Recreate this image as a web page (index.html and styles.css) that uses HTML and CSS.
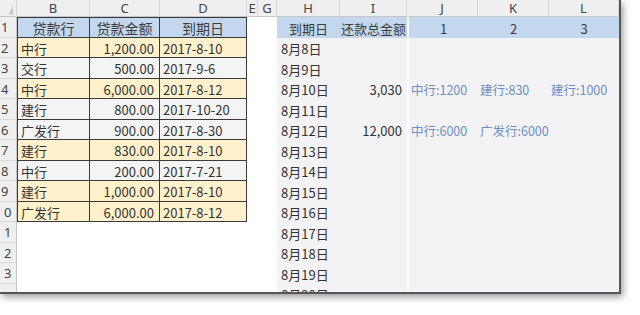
FILE: index.html
```html
<!DOCTYPE html>
<html lang="zh-CN">
<head>
<meta charset="utf-8">
<title>贷款到期汇总</title>
<link rel="stylesheet" href="styles.css">
</head>
<body>
<div class="window">
  <div class="sheet">
    <!-- column headers -->
    <div class="c ch corner"><svg width="17" height="17" viewBox="0 0 17 17"><polygon points="9,15 14,15 14,5" fill="#c9c9c9"/></svg></div>
    <div class="c ch">B</div>
    <div class="c ch">C</div>
    <div class="c ch">D</div>
    <div class="c ch">E</div>
    <div class="c ch">G</div>
    <div class="c ch">H</div>
    <div class="c ch">I</div>
    <div class="c ch">J</div>
    <div class="c ch">K</div>
    <div class="c ch">L</div>

    <!-- row 1 -->
    <div class="c rh">1</div>
    <div class="c t tl tt hd ctr big">贷款行</div>
    <div class="c t tt hd ctr big">贷款金额</div>
    <div class="c t tt hd ctr big">到期日</div>
    <div class="c w"></div>
    <div class="c w"></div>
    <div class="c hd ctr">到期日</div>
    <div class="c hd ctr">还款总金额</div>
    <div class="c hd ctr rj">1</div>
    <div class="c hd ctr">2</div>
    <div class="c hd ctr">3</div>

    <!-- row 2 -->
    <div class="c rh">2</div>
    <div class="c t tl y">中行</div>
    <div class="c t y num">1,200.00</div>
    <div class="c t y">2017-8-10</div>
    <div class="c w"></div>
    <div class="c w"></div>
    <div class="c r dt">8月8日</div>
    <div class="c r num"></div>
    <div class="c r rj"></div>
    <div class="c r"></div>
    <div class="c r"></div>

    <!-- row 3 -->
    <div class="c rh">3</div>
    <div class="c t tl g">交行</div>
    <div class="c t g num">500.00</div>
    <div class="c t g">2017-9-6</div>
    <div class="c w"></div>
    <div class="c w"></div>
    <div class="c r dt">8月9日</div>
    <div class="c r num"></div>
    <div class="c r rj"></div>
    <div class="c r"></div>
    <div class="c r"></div>

    <!-- row 4 -->
    <div class="c rh">4</div>
    <div class="c t tl y">中行</div>
    <div class="c t y num">6,000.00</div>
    <div class="c t y">2017-8-12</div>
    <div class="c w"></div>
    <div class="c w"></div>
    <div class="c r dt">8月10日</div>
    <div class="c r num">3,030</div>
    <div class="c r rj bl">中行:1200</div>
    <div class="c r bl">建行:830</div>
    <div class="c r bl">建行:1000</div>

    <!-- row 5 -->
    <div class="c rh">5</div>
    <div class="c t tl g">建行</div>
    <div class="c t g num">800.00</div>
    <div class="c t g">2017-10-20</div>
    <div class="c w"></div>
    <div class="c w"></div>
    <div class="c r dt">8月11日</div>
    <div class="c r num"></div>
    <div class="c r rj"></div>
    <div class="c r"></div>
    <div class="c r"></div>

    <!-- row 6 -->
    <div class="c rh">6</div>
    <div class="c t tl g">广发行</div>
    <div class="c t g num">900.00</div>
    <div class="c t g">2017-8-30</div>
    <div class="c w"></div>
    <div class="c w"></div>
    <div class="c r dt">8月12日</div>
    <div class="c r num">12,000</div>
    <div class="c r rj bl">中行:6000</div>
    <div class="c r bl">广发行:6000</div>
    <div class="c r"></div>

    <!-- row 7 -->
    <div class="c rh">7</div>
    <div class="c t tl y">建行</div>
    <div class="c t y num">830.00</div>
    <div class="c t y">2017-8-10</div>
    <div class="c w"></div>
    <div class="c w"></div>
    <div class="c r dt">8月13日</div>
    <div class="c r num"></div>
    <div class="c r rj"></div>
    <div class="c r"></div>
    <div class="c r"></div>

    <!-- row 8 -->
    <div class="c rh">8</div>
    <div class="c t tl g">中行</div>
    <div class="c t g num">200.00</div>
    <div class="c t g">2017-7-21</div>
    <div class="c w"></div>
    <div class="c w"></div>
    <div class="c r dt">8月14日</div>
    <div class="c r num"></div>
    <div class="c r rj"></div>
    <div class="c r"></div>
    <div class="c r"></div>

    <!-- row 9 -->
    <div class="c rh">9</div>
    <div class="c t tl y">建行</div>
    <div class="c t y num">1,000.00</div>
    <div class="c t y">2017-8-10</div>
    <div class="c w"></div>
    <div class="c w"></div>
    <div class="c r dt">8月15日</div>
    <div class="c r num"></div>
    <div class="c r rj"></div>
    <div class="c r"></div>
    <div class="c r"></div>

    <!-- row 10 -->
    <div class="c rh rh2">0</div>
    <div class="c t tl y">广发行</div>
    <div class="c t y num">6,000.00</div>
    <div class="c t y">2017-8-12</div>
    <div class="c w"></div>
    <div class="c w"></div>
    <div class="c r dt">8月16日</div>
    <div class="c r num"></div>
    <div class="c r rj"></div>
    <div class="c r"></div>
    <div class="c r"></div>

    <!-- row 11 -->
    <div class="c rh rh2">1</div>
    <div class="c w"></div>
    <div class="c w"></div>
    <div class="c w"></div>
    <div class="c w"></div>
    <div class="c w"></div>
    <div class="c r dt">8月17日</div>
    <div class="c r num"></div>
    <div class="c r rj"></div>
    <div class="c r"></div>
    <div class="c r"></div>

    <!-- row 12 -->
    <div class="c rh rh2">2</div>
    <div class="c w"></div>
    <div class="c w"></div>
    <div class="c w"></div>
    <div class="c w"></div>
    <div class="c w"></div>
    <div class="c r dt">8月18日</div>
    <div class="c r num"></div>
    <div class="c r rj"></div>
    <div class="c r"></div>
    <div class="c r"></div>

    <!-- row 13 -->
    <div class="c rh rh2">3</div>
    <div class="c w"></div>
    <div class="c w"></div>
    <div class="c w"></div>
    <div class="c w"></div>
    <div class="c w"></div>
    <div class="c r dt">8月19日</div>
    <div class="c r num"></div>
    <div class="c r rj"></div>
    <div class="c r"></div>
    <div class="c r"></div>

    <!-- row 14 -->
    <div class="c rh"></div>
    <div class="c w"></div>
    <div class="c w"></div>
    <div class="c w"></div>
    <div class="c w"></div>
    <div class="c w"></div>
    <div class="c r dt">8月20日</div>
    <div class="c r num"></div>
    <div class="c r rj"></div>
    <div class="c r"></div>
    <div class="c r"></div>
  </div>
</div>
</body>
</html>
```

FILE: styles.css
```css
* {
  box-sizing: border-box;
}

html, body {
  margin: 0;
  padding: 0;
  background: #ffffff;
}

body {
  font-family: "Noto Sans CJK SC", "Noto Sans", sans-serif;
  font-size: 13px;
  color: #333333;
  width: 640px;
  height: 315px;
  overflow: hidden;
}

.window {
  width: 621px;
  height: 294px;
  border-right: 2px solid #555555;
  border-bottom: 2px solid #555555;
  box-shadow: 2px 3px 7px rgba(0, 0, 0, 0.4);
  overflow: hidden;
  background: #ffffff;
}

.sheet {
  display: grid;
  grid-template-columns: 17px 73px 70px 87px 11px 19px 63px 67px 71px 71px 70px;
  grid-template-rows: 17px repeat(14, 20.5px);
}

.c {
  display: flex;
  align-items: center;
  white-space: nowrap;
  overflow: hidden;
  padding: 2px 3px 0 3px;
  line-height: 1;
}

.ch {
  justify-content: center;
  padding: 0;
  background: #efefef;
  color: #444444;
  font-family: "Noto Sans", "Liberation Sans", sans-serif;
  font-size: 13px;
  border-right: 1px solid #d6d6d6;
  border-bottom: 1px solid #c6c6c6;
}

.corner {
  align-items: stretch;
}

.rh {
  padding: 2px 0 0 1px;
  background: #efefef;
  color: #444444;
  font-family: "Noto Sans", "Liberation Sans", sans-serif;
  font-size: 13px;
  border-right: 1px solid #c6c6c6;
  border-bottom: 1px solid #d9d9d9;
}

.rh2 {
  padding-left: 4px;
}

.t {
  border-right: 1px solid #3a3a3a;
  border-bottom: 1px solid #3a3a3a;
}

.tl {
  border-left: 1px solid #3a3a3a;
}

.tt {
  border-top: 1px solid #3a3a3a;
}

.hd {
  background: #c3d8ee;
  color: #3c3c3c;
}

.big {
  font-size: 14px;
}

.y {
  background: #fff1cb;
}

.g {
  background: #f4f4f4;
}

.w {
  background: #ffffff;
}

.r {
  background: #f3f2f5;
}

.rj {
  border-left: 2px solid #ffffff;
}

.ctr {
  justify-content: center;
  padding-left: 0;
  padding-right: 0;
}

.num {
  justify-content: flex-end;
  padding-right: 5px;
}

.dt {
  padding-left: 4px;
}

.bl {
  color: #6d8fc4;
  font-size: 12.5px;
  padding-left: 2px;
}
```
